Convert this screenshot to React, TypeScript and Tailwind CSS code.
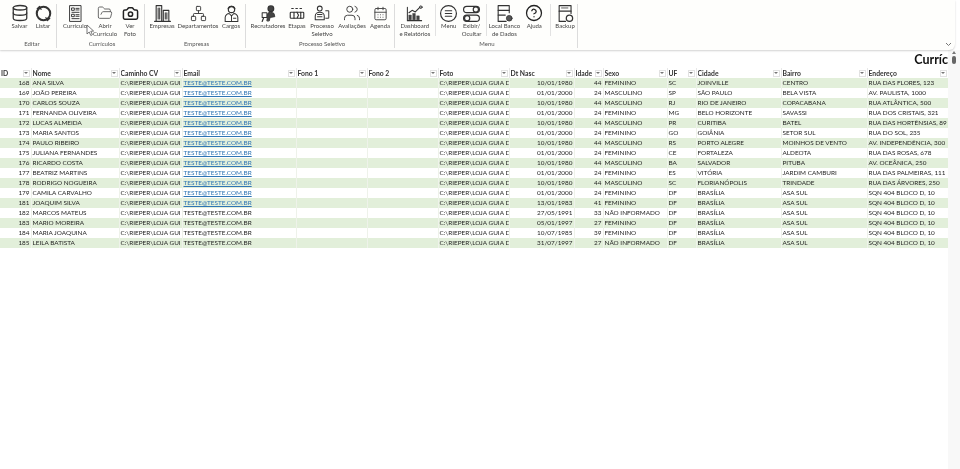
import React from 'react';
import { CircleHelp, Camera, FolderOpen, Database, Network, CalendarDays, Users } from 'lucide-react';

const FONT = "font-['Lato','Liberation_Sans',sans-serif]";

const Ic: React.FC<{ children: React.ReactNode; size?: number }> = ({ children, size = 20 }) => (
  <svg width={size} height={size} viewBox="0 0 24 24" fill="none" stroke="#333" strokeWidth={1.5} strokeLinecap="round" strokeLinejoin="round">
    {children}
  </svg>
);

const icons: Record<string, React.ReactNode> = {
  salvar: <Database size={18} color="#333" strokeWidth={1.7} />,
  listar: (
    <Ic size={19}>
      <circle cx="12" cy="12" r="8.5" strokeWidth={2.6} />
      <path d="M4 6l3-3 2 4M20 18l-3 3-2-4" strokeWidth={1.4} />
    </Ic>
  ),
  curriculo: (
    <Ic size={19}>
      <rect x="5" y="2" width="14" height="20" strokeWidth={1.2} />
      <path d="M7.5 5h3v3h-3zM12.5 5.5h4M12.5 7.5h4M7.5 10.5h9M7.5 13h3v3h-3zM12.5 13.5h4M12.5 15.5h4M7.5 18.5h9" strokeWidth={1.2} />
    </Ic>
  ),
  abrir: <FolderOpen size={16} color="#555" strokeWidth={1.3} />,
  foto: <Camera size={17} color="#222" strokeWidth={2.1} />,
  empresas: (
    <Ic size={19}>
      <path d="M4 22V2h7v20M13 22V8h7v14M2 22h20" strokeWidth={1.4} />
      <path d="M6.5 5v14M8.5 5v14M15.5 11v8M17.5 11v8" strokeWidth={1.3} />
    </Ic>
  ),
  departamentos: <Network size={17} color="#444" strokeWidth={1.4} />,
  cargos: (
    <Ic size={19}>
      <circle cx="12" cy="7" r="4" strokeWidth={1.5} />
      <path d="M8 5.5c2-3 6-3 8 0" strokeWidth={2} />
      <path d="M4 22v-5c0-3 3-5 5-5l3 3 3-3c2 0 5 2 5 5v5z" strokeWidth={1.3} />
      <path d="M12 15v7M14.5 18h3" strokeWidth={1.2} />
    </Ic>
  ),
  recrutadores: (
    <Ic size={19}>
      <circle cx="15" cy="6" r="3.6" fill="#444" />
      <path d="M10 21l1-9c1-2 6-2 8 0l1 4-6 1-1 4z" fill="#444" strokeWidth={1.1} />
      <rect x="4" y="11" width="6" height="6" strokeWidth={1.3} />
      <path d="M6 17l-2 5" strokeWidth={1.5} />
    </Ic>
  ),
  etapas: (
    <Ic size={18}>
      <rect x="3" y="11" width="18" height="8" rx="1" strokeWidth={1.5} />
      <path d="M8 11v8M12 11l2 4-2 4M17 11v8M5 6h3M10.5 6h3M16 6h3" strokeWidth={1.6} strokeDasharray="2 1" />
    </Ic>
  ),
  processo: (
    <Ic size={18}>
      <circle cx="9" cy="6" r="3.2" strokeWidth={1.4} />
      <path d="M3 21v-5c0-3 3-5 6-5s6 2 6 5v5z" strokeWidth={1.4} />
      <path d="M6 14h6M6 17h6M17 9h4v10h-4" strokeWidth={1.3} />
    </Ic>
  ),
  avaliacoes: <Users size={18} color="#444" strokeWidth={1.3} />,
  agenda: <CalendarDays size={15} color="#444" strokeWidth={1.5} />,
  dashboard: (
    <Ic size={19}>
      <path d="M3 4v17h18" strokeWidth={1.3} />
      <rect x="5" y="14" width="3" height="6" fill="#444" strokeWidth={0.6} />
      <rect x="10" y="12" width="3" height="8" fill="#444" strokeWidth={0.6} />
      <rect x="15" y="15" width="3" height="5" fill="#444" strokeWidth={0.6} />
      <path d="M5 11l4-3 4 2 6-6" strokeWidth={1.4} />
      <circle cx="20" cy="4" r="1.6" strokeWidth={1.2} />
    </Ic>
  ),
  menu: (
    <Ic size={19}>
      <circle cx="12" cy="12" r="10" strokeWidth={1.5} />
      <path d="M8 8.5h8M8 12h8M8 15.5h8" strokeWidth={1.5} />
    </Ic>
  ),
  exibir: (
    <Ic size={19}>
      <rect x="2" y="3" width="20" height="8" rx="4" strokeWidth={1.5} />
      <circle cx="17.5" cy="7" r="3.3" strokeWidth={1.5} />
      <rect x="2" y="14" width="20" height="8" rx="4" strokeWidth={1.5} />
      <circle cx="6.5" cy="18" r="3.3" strokeWidth={1.5} />
    </Ic>
  ),
  local: (
    <Ic size={19}>
      <path d="M14 22H4V2h14v9" strokeWidth={1.4} />
      <path d="M4 8h14M4 14h9" strokeWidth={1.4} />
      <circle cx="18" cy="18" r="3.6" fill="#555" strokeWidth={1} />
    </Ic>
  ),
  ajuda: <CircleHelp size={18} color="#222" strokeWidth={1.7} />,
  backup: (
    <Ic size={19}>
      <path d="M12 22H4V2h15v10" strokeWidth={1.4} />
      <path d="M4 9h15" strokeWidth={1.4} />
      <path d="M7 5h8" strokeWidth={1} />
      <circle cx="17" cy="18" r="4" strokeWidth={1.6} />
    </Ic>
  ),
};

type Item = { key: string; w: string; label: React.ReactNode };

const groups: { label: string; w: string; pl: string; items: (Item | 'sep')[] }[] = [
  {
    label: 'Editar', w: 'w-[57px]', pl: 'pl-[8px]',
    items: [
      { key: 'salvar', w: 'w-[23px]', label: 'Salvar' },
      { key: 'listar', w: 'w-[24px]', label: 'Listar' },
    ],
  },
  {
    label: 'Currículos', w: 'w-[88px]', pl: 'pl-[3px]',
    items: [
      { key: 'curriculo', w: 'w-[30px]', label: 'Currículo' },
      { key: 'abrir', w: 'w-[30px]', label: <>Abrir<br />Currículo</> },
      { key: 'foto', w: 'w-[20px]', label: <>Ver<br />Foto</> },
    ],
  },
  {
    label: 'Empresas', w: 'w-[101px]', pl: 'pl-[3px]',
    items: [
      { key: 'empresas', w: 'w-[28px]', label: 'Empresas' },
      { key: 'departamentos', w: 'w-[44px]', label: 'Departamentos' },
      { key: 'cargos', w: 'w-[22px]', label: 'Cargos' },
    ],
  },
  {
    label: 'Processo Seletivo', w: 'w-[149px]', pl: 'pl-[4px]',
    items: [
      { key: 'recrutadores', w: 'w-[36px]', label: 'Recrutadores' },
      { key: 'etapas', w: 'w-[22px]', label: 'Etapas' },
      { key: 'processo', w: 'w-[28px]', label: <>Processo<br />Seletivo</> },
      { key: 'avaliacoes', w: 'w-[32px]', label: 'Avaliações' },
      { key: 'agenda', w: 'w-[24px]', label: 'Agenda' },
    ],
  },
  {
    label: 'Menu', w: 'w-[183px]', pl: 'pl-[2px]',
    items: [
      { key: 'dashboard', w: 'w-[36px]', label: <>Dashboard<br />e Relatórios</> },
      'sep',
      { key: 'menu', w: 'w-[22px]', label: 'Menu' },
      { key: 'exibir', w: 'w-[24px]', label: <>Exibir/<br />Ocultar</> },
      'sep',
      { key: 'local', w: 'w-[32px]', label: <>Local Banco<br />de Dados</> },
      { key: 'ajuda', w: 'w-[28px]', label: 'Ajuda' },
      'sep',
      { key: 'backup', w: 'w-[24px]', label: 'Backup' },
    ],
  },
];

const columns = [
  { name: 'ID', w: 'w-[31px]' },
  { name: 'Nome', w: 'w-[88px]' },
  { name: 'Caminho CV', w: 'w-[63px]' },
  { name: 'Email', w: 'w-[114px]' },
  { name: 'Fono 1', w: 'w-[71px]' },
  { name: 'Fono 2', w: 'w-[71px]' },
  { name: 'Foto', w: 'w-[71px]' },
  { name: 'Dt Nasc', w: 'w-[65px]' },
  { name: 'Idade', w: 'w-[29px]' },
  { name: 'Sexo', w: 'w-[64px]' },
  { name: 'UF', w: 'w-[29px]' },
  { name: 'Cidade', w: 'w-[85px]' },
  { name: 'Bairro', w: 'w-[86px]' },
  { name: 'Endereço', w: 'w-[81px]' },
];

const rows = [
  [168, 'ANA SILVA', '10/01/1980', 44, 'FEMININO', 'SC', 'JOINVILLE', 'CENTRO', 'RUA DAS FLORES, 123'],
  [169, 'JOÃO PEREIRA', '01/01/2000', 24, 'MASCULINO', 'SP', 'SÃO PAULO', 'BELA VISTA', 'AV. PAULISTA, 1000'],
  [170, 'CARLOS SOUZA', '10/01/1980', 44, 'MASCULINO', 'RJ', 'RIO DE JANEIRO', 'COPACABANA', 'RUA ATLÂNTICA, 500'],
  [171, 'FERNANDA OLIVEIRA', '01/01/2000', 24, 'FEMININO', 'MG', 'BELO HORIZONTE', 'SAVASSI', 'RUA DOS CRISTAIS, 321'],
  [172, 'LUCAS ALMEIDA', '10/01/1980', 44, 'MASCULINO', 'PR', 'CURITIBA', 'BATEL', 'RUA DAS HORTÊNSIAS, 89'],
  [173, 'MARIA SANTOS', '01/01/2000', 24, 'FEMININO', 'GO', 'GOIÂNIA', 'SETOR SUL', 'RUA DO SOL, 235'],
  [174, 'PAULO RIBEIRO', '10/01/1980', 44, 'MASCULINO', 'RS', 'PORTO ALEGRE', 'MOINHOS DE VENTO', 'AV. INDEPENDÊNCIA, 300'],
  [175, 'JULIANA FERNANDES', '01/01/2000', 24, 'FEMININO', 'CE', 'FORTALEZA', 'ALDEOTA', 'RUA DAS ROSAS, 678'],
  [176, 'RICARDO COSTA', '10/01/1980', 44, 'MASCULINO', 'BA', 'SALVADOR', 'PITUBA', 'AV. OCEÂNICA, 250'],
  [177, 'BEATRIZ MARTINS', '01/01/2000', 24, 'FEMININO', 'ES', 'VITÓRIA', 'JARDIM CAMBURI', 'RUA DAS PALMEIRAS, 111'],
  [178, 'RODRIGO NOGUEIRA', '10/01/1980', 44, 'MASCULINO', 'SC', 'FLORIANÓPOLIS', 'TRINDADE', 'RUA DAS ÁRVORES, 250'],
  [179, 'CAMILA CARVALHO', '01/01/2000', 24, 'FEMININO', 'DF', 'BRASÍLIA', 'ASA SUL', 'SQN 404 BLOCO D, 10'],
  [181, 'JOAQUIM SILVA', '13/01/1983', 41, 'FEMININO', 'DF', 'BRASÍLIA', 'ASA SUL', 'SQN 404 BLOCO D, 10'],
  [182, 'MARCOS MATEUS', '27/05/1991', 33, 'NÃO INFORMADO', 'DF', 'BRASÍLIA', 'ASA SUL', 'SQN 404 BLOCO D, 10'],
  [183, 'MARIO MOREIRA', '05/01/1997', 27, 'FEMININO', 'DF', 'BRASÍLIA', 'ASA SUL', 'SQN 404 BLOCO D, 10'],
  [184, 'MARIA JOAQUINA', '10/07/1985', 39, 'FEMININO', 'DF', 'BRASÍLIA', 'ASA SUL', 'SQN 404 BLOCO D, 10'],
  [185, 'LEILA BATISTA', '31/07/1997', 27, 'NÃO INFORMADO', 'DF', 'BRASÍLIA', 'ASA SUL', 'SQN 404 BLOCO D, 10'],
];

const td = 'h-[10px] p-0 pl-[1px] leading-[10px] whitespace-nowrap overflow-hidden border-r border-[#eef2ea]';

const App: React.FC = () => (
  <div className={`relative w-[960px] h-[469px] overflow-hidden bg-white flex flex-col text-[#1f1f1f] blur-[0.3px] ${FONT}`}>
    {/* Ribbon */}
    <div className="relative w-[955px] h-[50px] shrink-0 flex bg-[#fefefc] rounded-br-md shadow-[0_1px_2px_rgba(0,0,0,0.18)]">
      {groups.map(g => (
        <div key={g.label} className={`${g.w} ${g.pl} h-[44px] mt-[4px] flex flex-col border-r border-[#dcdcdc]`}>
          <div className="flex h-[38px]">
            {g.items.map((it, i) =>
              it === 'sep' ? (
                <div key={i} className="w-[1px] h-[32px] mx-[2px] bg-[#e2e2e2]" />
              ) : (
                <div key={it.key} className={`${it.w} flex flex-col items-center`}>
                  <div className="h-[18px] flex items-center justify-center">{icons[it.key]}</div>
                  <div className="text-[6px] leading-[8px] text-center whitespace-nowrap text-[#444]">{it.label}</div>
                </div>
              )
            )}
          </div>
          <div className="text-[6px] leading-[8px] text-center text-[#555]">{g.label}</div>
        </div>
      ))}
      <svg className="absolute right-[3px] bottom-[3px]" width="7" height="5" viewBox="0 0 7 5" fill="none" stroke="#777">
        <path d="M1 1l2.5 2.5L6 1" />
      </svg>
    </div>

    <div className="flex flex-1 min-h-0">
      <div className="w-[948px] shrink-0">
        {/* Sheet title */}
        <div className="h-[18px] text-right text-[12.5px] leading-[20px] font-bold text-[#111] overflow-hidden">Curríc</div>

        <table className="table-fixed border-collapse w-[948px] text-[6.4px]">
          <thead>
            <tr className="h-[10px] bg-white">
              {columns.map(c => (
                <th key={c.name} className={`${c.w} p-0 pl-[1px] text-left font-bold text-[6.8px] leading-[10px] text-[#333] border-r border-[#e8e8e8]`}>
                  <div className="flex items-center justify-between">
                    <span className="whitespace-nowrap overflow-hidden">{c.name}</span>
                    <span className="w-[7px] h-[7px] shrink-0 mr-[1px] border border-[#e2e2e2] flex items-center justify-center">
                      <span className="border-x-[2px] border-t-[2px] border-x-transparent border-t-[#777]" />
                    </span>
                  </div>
                </th>
              ))}
            </tr>
          </thead>
          <tbody>
            {rows.map((r, i) => (
              <tr key={String(r[0])} className={i % 2 === 0 ? 'bg-[#e2efda]' : 'bg-white'}>
                <td className={`${td} text-right pr-[1px]`}>{r[0]}</td>
                <td className={td}>{r[1]}</td>
                <td className={td}>C:\RIEPER\LOJA GUI</td>
                <td className={`${td} ${Number(r[0]) <= 181 ? 'text-[#2f75b5] underline' : ''}`}>TESTE@TESTE.COM.BR</td>
                <td className={td}></td>
                <td className={td}></td>
                <td className={td}>C:\RIEPER\LOJA GUIA D</td>
                <td className={`${td} text-right pr-[1px]`}>{r[2]}</td>
                <td className={`${td} text-right pr-[1px]`}>{r[3]}</td>
                <td className={td}>{r[4]}</td>
                <td className={td}>{r[5]}</td>
                <td className={td}>{r[6]}</td>
                <td className={td}>{r[7]}</td>
                <td className={td}>{r[8]}</td>
              </tr>
            ))}
          </tbody>
        </table>
      </div>

      {/* Scrollbar lane */}
      <div className="flex-1 bg-[#f8f8f8] flex flex-col items-center pr-[1px] pt-[1px]">
        <span className="border-x-[2px] border-b-[3px] border-x-transparent border-b-[#777]" />
        <span className="mt-[2px] w-[4px] h-[8px] rounded-[2px] bg-[#666]" />
      </div>
    </div>

    {/* Mouse pointer */}
    <svg className="absolute left-[86px] top-[24px]" width="9" height="13" viewBox="0 0 9 13" fill="#fff" stroke="#555" strokeWidth="0.8">
      <path d="M1 1v9l2.2-2 1.6 3.5 1.6-.8L4.8 7.3 7.6 7z" />
    </svg>
  </div>
);

export default App;
